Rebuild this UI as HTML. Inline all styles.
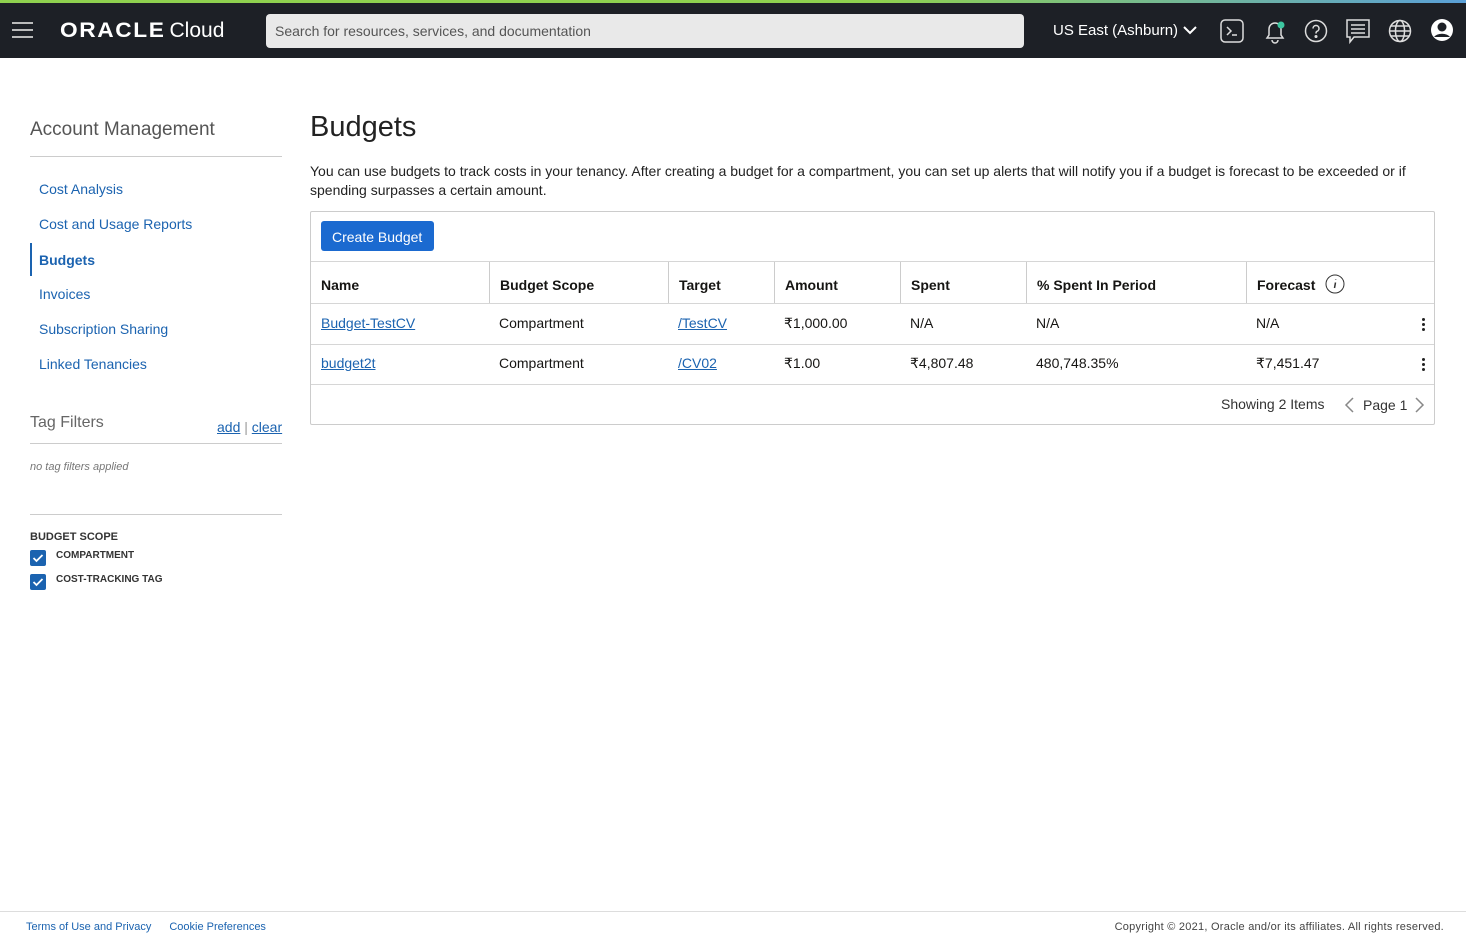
<!DOCTYPE html>
<html><head><meta charset="utf-8"><style>
*{box-sizing:border-box;margin:0;padding:0}
body{width:1466px;height:942px;background:#fff;font-family:"Liberation Sans",sans-serif;color:#161513;position:relative;overflow:hidden}
.top{position:absolute;left:0;top:0;width:1466px;height:58px;background:#1d2026}
.top .bar{position:absolute;left:0;top:0;width:100%;height:3px;background:linear-gradient(90deg,#8fd14f,#8fd14f 60%,#5aa0d8)}
.abs{position:absolute}
a{color:#1b63b0}
.u{text-decoration:underline}
.nav a{position:absolute;left:39px;font-size:14px;text-decoration:none;color:#1b63b0}
.th{position:absolute;top:262px;height:42px;font-size:14px;font-weight:bold;padding:15px 10px 0;border-left:1px solid #ccc}
.cell{position:absolute;font-size:14px}
.hl{position:absolute;left:311px;width:1123px;height:1px;background:#d6d6d6}
.dots{position:absolute;left:1422px;width:4px}
.dots i{display:block;width:3px;height:3px;background:#222;border-radius:50%;margin-bottom:2px}
</style></head><body>
<div class="top"><div class="bar"></div>
<div class="abs" style="left:12px;top:22px;width:21px"><div style="height:2px;background:#bbb;margin-bottom:5px"></div><div style="height:2px;background:#bbb;margin-bottom:5px"></div><div style="height:2px;background:#bbb"></div></div>
<div class="abs" style="left:60px;top:19px;color:#fff;font-size:21px"><span style="font-weight:bold;letter-spacing:1.5px;transform:scaleX(1.08);display:inline-block;transform-origin:left">ORACLE</span> <span style="margin-left:6px">Cloud</span></div>
<div class="abs" style="left:266px;top:14px;width:758px;height:34px;background:#e9e9e9;border-radius:4px;color:#555;font-size:14px;padding:9px 9px">Search for resources, services, and documentation</div>
<div class="abs" style="left:1053px;top:22px;color:#fff;font-size:15px">US East (Ashburn)</div>
<svg class="abs" style="left:1182px;top:24px" width="16" height="12"><path d="M2 3l6 6 6-6" stroke="#fff" stroke-width="2" fill="none"/></svg>
<svg class="abs" style="left:1220px;top:19px" width="24" height="24" fill="none" stroke="#ddd" stroke-width="1.5"><rect x="1" y="1" width="22" height="22" rx="4"/><path d="M7 8l4 4-4 4M12 16h5"/></svg>
<svg class="abs" style="left:1262px;top:18px" width="26" height="26" fill="none" stroke="#ddd" stroke-width="1.5"><path d="M5 20h16l-2-3v-6a6 6 0 0 0-12 0v6zM10 22a3 3 0 0 0 6 0"/><circle cx="19" cy="7" r="3.5" fill="#3cc7a0" stroke="none"/></svg>
<svg class="abs" style="left:1304px;top:19px" width="24" height="24" fill="none" stroke="#ddd" stroke-width="1.5"><circle cx="12" cy="12" r="10.5"/><path d="M9 9.5a3 3 0 1 1 4 2.8c-1 .4-1 1-1 2.2"/><circle cx="12" cy="17.5" r=".8" fill="#ddd"/></svg>
<svg class="abs" style="left:1346px;top:19px" width="24" height="26" fill="none" stroke="#ddd" stroke-width="1.5"><path d="M1 1h22v17H8l-4 5v-5H1z"/><path d="M5 6h14M5 10h14M5 14h14"/></svg>
<svg class="abs" style="left:1388px;top:19px" width="24" height="24" fill="none" stroke="#ddd" stroke-width="1.5"><circle cx="12" cy="12" r="10.5"/><ellipse cx="12" cy="12" rx="4.5" ry="10.5"/><path d="M1.5 12h21M3 7h18M3 17h18"/></svg>
<svg class="abs" style="left:1430px;top:18px" width="24" height="24"><circle cx="12" cy="12" r="11" fill="#fff"/><circle cx="12" cy="9" r="4.5" fill="#1d2026"/><path d="M4 19a9 6 0 0 1 16 0" fill="#1d2026"/></svg>
</div>

<div class="abs" style="left:30px;top:119px;font-size:19px;color:#555">Account Management</div>
<div class="abs" style="left:30px;top:156px;width:252px;height:1px;background:#ccc"></div>
<div class="nav">
<a style="top:181px">Cost Analysis</a>
<a style="top:216px">Cost and Usage Reports</a>
<a style="top:252px;font-weight:bold">Budgets</a>
<a style="top:286px">Invoices</a>
<a style="top:321px">Subscription Sharing</a>
<a style="top:356px">Linked Tenancies</a>
</div>
<div class="abs" style="left:30px;top:243px;width:2px;height:33px;background:#1b63b0"></div>
<div class="abs" style="left:30px;top:414px;font-size:16px;color:#666">Tag Filters</div>
<div class="abs" style="left:217px;top:419px;font-size:14px;color:#999"><a class="u">add</a> | <a class="u">clear</a></div>
<div class="abs" style="left:30px;top:443px;width:252px;height:1px;background:#ccc"></div>
<div class="abs" style="left:30px;top:461px;font-size:11px;font-style:italic;color:#777">no tag filters applied</div>
<div class="abs" style="left:30px;top:514px;width:252px;height:1px;background:#ccc"></div>
<div class="abs" style="left:30px;top:531px;font-size:11px;font-weight:bold;color:#333">BUDGET SCOPE</div>
<svg class="abs" style="left:30px;top:550px" width="16" height="16"><rect width="16" height="16" rx="2" fill="#1b63b0"/><path d="M3.5 8l3 3 6-6" stroke="#fff" stroke-width="1.8" fill="none"/></svg>
<div class="abs" style="left:56px;top:550px;font-size:10px;font-weight:bold;color:#333">COMPARTMENT</div>
<svg class="abs" style="left:30px;top:574px" width="16" height="16"><rect width="16" height="16" rx="2" fill="#1b63b0"/><path d="M3.5 8l3 3 6-6" stroke="#fff" stroke-width="1.8" fill="none"/></svg>
<div class="abs" style="left:56px;top:574px;font-size:10px;font-weight:bold;color:#333">COST-TRACKING TAG</div>

<div class="abs" style="left:310px;top:111px;font-size:29px;color:#222">Budgets</div>
<div class="abs" style="left:310px;top:162px;width:1130px;font-size:14px;line-height:19px;color:#222">You can use budgets to track costs in your tenancy. After creating a budget for a compartment, you can set up alerts that will notify you if a budget is forecast to be exceeded or if spending surpasses a certain amount.</div>

<div class="abs" style="left:310px;top:211px;width:1125px;height:214px;border:1px solid #ccc;border-radius:2px"></div>
<div class="abs" style="left:321px;top:221px;width:113px;height:30px;background:#1b6ad0;border-radius:3px;color:#fff;font-size:14px;padding:8px 0 0 11px">Create Budget</div>
<div class="hl" style="top:261px"></div>
<div class="th" style="left:311px;border-left:none">Name</div>
<div class="th" style="left:489px">Budget Scope</div>
<div class="th" style="left:668px">Target</div>
<div class="th" style="left:774px">Amount</div>
<div class="th" style="left:900px">Spent</div>
<div class="th" style="left:1026px">% Spent In Period</div>
<div class="th" style="left:1246px;padding-top:12px">Forecast <svg style="vertical-align:-4px;margin-left:6px" width="20" height="20" fill="none" stroke="#333"><circle cx="10" cy="10" r="9"/><path d="M10.5 8.5l-1 5.5M10.7 5.5v.5" stroke-width="1.5"/></svg></div>
<div class="hl" style="top:303px"></div>
<div class="hl" style="top:344px"></div>
<div class="hl" style="top:384px"></div>

<div class="cell" style="left:321px;top:315px"><a class="u">Budget-TestCV</a></div>
<div class="cell" style="left:499px;top:315px">Compartment</div>
<div class="cell" style="left:678px;top:315px"><a class="u">/TestCV</a></div>
<div class="cell" style="left:784px;top:315px">₹1,000.00</div>
<div class="cell" style="left:910px;top:315px">N/A</div>
<div class="cell" style="left:1036px;top:315px">N/A</div>
<div class="cell" style="left:1256px;top:315px">N/A</div>
<div class="dots" style="top:318px"><i></i><i></i><i></i></div>

<div class="cell" style="left:321px;top:355px"><a class="u">budget2t</a></div>
<div class="cell" style="left:499px;top:355px">Compartment</div>
<div class="cell" style="left:678px;top:355px"><a class="u">/CV02</a></div>
<div class="cell" style="left:784px;top:355px">₹1.00</div>
<div class="cell" style="left:910px;top:355px">₹4,807.48</div>
<div class="cell" style="left:1036px;top:355px">480,748.35%</div>
<div class="cell" style="left:1256px;top:355px">₹7,451.47</div>
<div class="dots" style="top:358px"><i></i><i></i><i></i></div>

<div class="cell" style="left:1221px;top:396px;color:#333">Showing 2 Items</div>
<svg class="abs" style="left:1343px;top:397px" width="12" height="16"><path d="M10 1L3 8l7 7" stroke="#888" stroke-width="1.5" fill="none"/></svg>
<div class="cell" style="left:1363px;top:397px;color:#333">Page 1</div>
<svg class="abs" style="left:1414px;top:397px" width="12" height="16"><path d="M2 1l7 7-7 7" stroke="#888" stroke-width="1.5" fill="none"/></svg>

<div class="abs" style="left:0;top:911px;width:1466px;height:1px;background:#ddd"></div>
<div class="abs" style="left:26px;top:921px;font-size:11px"><a style="text-decoration:none">Terms of Use and Privacy</a><a style="text-decoration:none;margin-left:18px">Cookie Preferences</a></div>
<div class="abs" style="right:22px;top:921px;font-size:11px;color:#444;letter-spacing:0.25px">Copyright © 2021, Oracle and/or its affiliates. All rights reserved.</div>
</body></html>
